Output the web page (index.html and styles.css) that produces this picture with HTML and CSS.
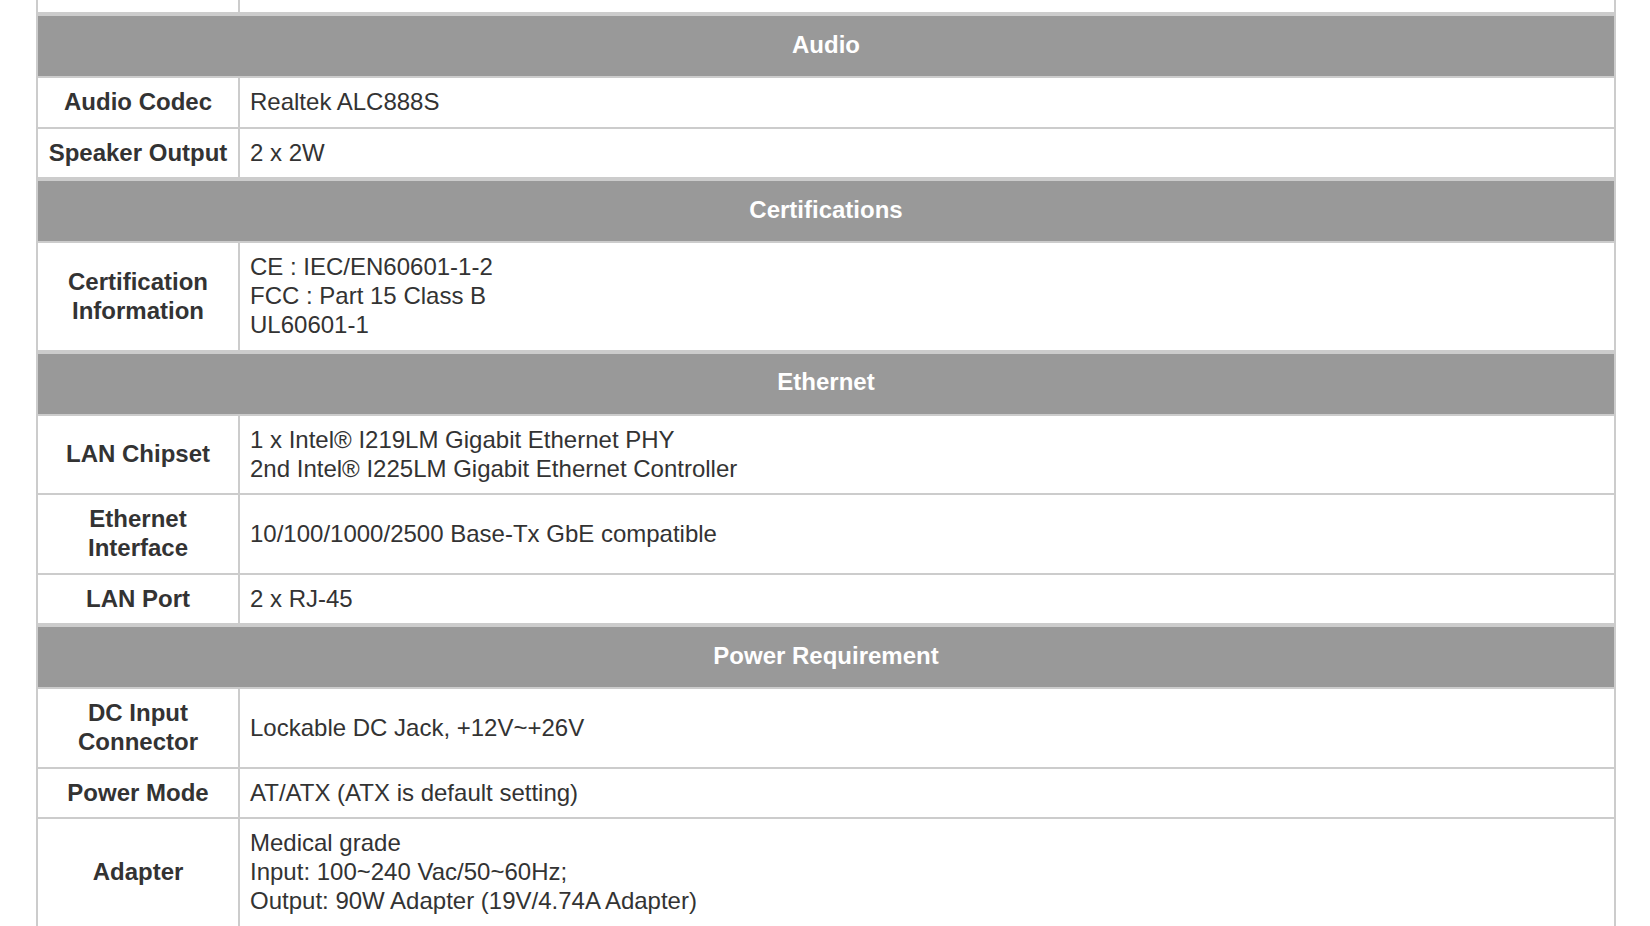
FILE: index.html
```html
<!DOCTYPE html>
<html lang="en">
<head>
<meta charset="utf-8">
<title>Specifications</title>
<link rel="stylesheet" href="styles.css">
</head>
<body>
<table class="spec">
  <tbody>
    <tr class="cut"><td class="label"></td><td class="value"></td></tr>
    <tr class="section"><th colspan="2">Audio</th></tr>
    <tr><td class="label">Audio Codec</td><td class="value">Realtek ALC888S</td></tr>
    <tr><td class="label">Speaker Output</td><td class="value">2 x 2W</td></tr>
    <tr class="section"><th colspan="2">Certifications</th></tr>
    <tr><td class="label">Certification Information</td><td class="value">CE : IEC/EN60601-1-2<br>FCC : Part 15 Class B<br>UL60601-1</td></tr>
    <tr class="section"><th colspan="2">Ethernet</th></tr>
    <tr><td class="label">LAN Chipset</td><td class="value">1 x Intel® I219LM Gigabit Ethernet PHY<br>2nd Intel® I225LM Gigabit Ethernet Controller</td></tr>
    <tr><td class="label">Ethernet Interface</td><td class="value">10/100/1000/2500 Base-Tx GbE compatible</td></tr>
    <tr><td class="label">LAN Port</td><td class="value">2 x RJ-45</td></tr>
    <tr class="section"><th colspan="2">Power Requirement</th></tr>
    <tr><td class="label">DC Input Connector</td><td class="value">Lockable DC Jack, +12V~+26V</td></tr>
    <tr><td class="label">Power Mode</td><td class="value">AT/ATX (ATX is default setting)</td></tr>
    <tr><td class="label">Adapter</td><td class="value">Medical grade<br>Input: 100~240 Vac/50~60Hz;<br>Output: 90W Adapter (19V/4.74A Adapter)</td></tr>
  </tbody>
</table>
</body>
</html>
```

FILE: styles.css
```css
html, body {
  margin: 0;
  padding: 0;
  background: #ffffff;
}

body {
  padding-left: 36px;
  font-family: "Liberation Sans", Arial, Helvetica, sans-serif;
  color: #333333;
  font-size: 24px;
  line-height: 29px;
}

.spec {
  width: 1580px;
  border-collapse: separate;
  border-spacing: 0;
  border: 1px solid #cccccc;
  border-top: none;
}

.spec td,
.spec th {
  border: 1px solid #cccccc;
  padding: 9px 10px 10.5px 10px;
  vertical-align: middle;
}

.spec .label {
  width: 202px;
  box-sizing: border-box;
  padding-left: 8px;
  padding-right: 8px;
  text-align: center;
  font-weight: bold;
}

.spec .value {
  text-align: left;
}

.spec .cut td {
  border-top: none;
  height: 12px;
  padding: 0;
}

.spec .section th {
  background: #999999;
  color: #ffffff;
  font-weight: bold;
  text-align: center;
  border-top-width: 3px;
  padding-top: 13.5px;
  padding-bottom: 17.5px;
}
```
